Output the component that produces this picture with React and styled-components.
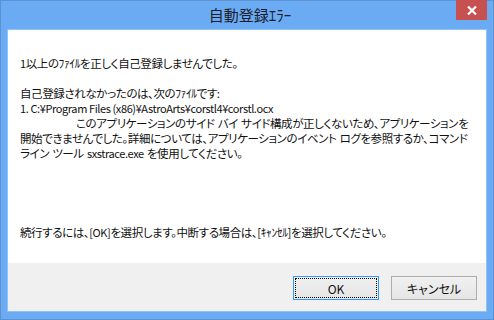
import React from 'react'
import styled, { createGlobalStyle } from 'styled-components'

const GlobalStyle = createGlobalStyle`
    html, body {
        margin: 0;
        padding: 0;
        background: #fff;
    }
    body {
        font-family: "Noto Sans CJK JP", "Noto Sans", sans-serif;
    }
`

const Window = styled.div`
    width: 494px;
    height: 320px;
    box-sizing: border-box;
    background-color: #6aabf4;
    border: 1px solid #5b92d4;
    padding: 0 6px 7px 6px;
    display: flex;
    flex-direction: column;
`

const TitleBar = styled.div`
    height: 28px;
    display: grid;
    grid-template-columns: 1fr auto 1fr;
    align-items: start;
`

const Title = styled.div`
    grid-column: 2;
    font-size: 15px;
    line-height: 28px;
    color: #1b1b2a;
    margin-left: 6px;
`

const CloseButton = styled.div`
    grid-column: 3;
    justify-self: end;
    width: 31px;
    height: 20px;
    margin-top: -1px;
    background-color: #c75050;
    display: flex;
    align-items: center;
    justify-content: center;
`

const Client = styled.div`
    flex: 1;
    border: 1px solid #8fc2f6;
    display: flex;
    flex-direction: column;
    background: #fff;
`

const Body = styled.div`
    flex: 1;
    padding: 26px 12px 23px 12px;
    display: flex;
    flex-direction: column;
    font-size: 11.5px;
    font-feature-settings: "palt";
    letter-spacing: -0.4px;
    word-spacing: 1px;
    line-height: 15px;
    color: #111;
`

const Para = styled.div`
    margin-bottom: ${({ gap }) => gap || 0}px;
`

const Line = styled.div`
    white-space: nowrap;
    padding-left: ${({ indent }) => indent || 0}px;
`

const Roman = styled.span`
    font-size: 11px;
    font-feature-settings: normal;
    letter-spacing: -0.4px;
    word-spacing: 0;
`

const Continue = styled.div`
    margin-top: auto;
    white-space: nowrap;
`

const Footer = styled.div`
    height: 48px;
    background-color: #f0f0f0;
    display: flex;
    justify-content: flex-end;
    align-items: flex-start;
    gap: 12px;
    padding: 13px 9px 0 0;
    box-sizing: border-box;
`

const Button = styled.div`
    width: 86px;
    height: 24px;
    box-sizing: border-box;
    border: 1px solid ${({ primary }) => primary ? '#3399ff' : '#adadad'};
    background: linear-gradient(#f0f0f0, #e5e5e5);
    display: flex;
    padding: 1px;
    font-size: 12px;
    font-feature-settings: "palt";
    color: #111;
`

const ButtonLabel = styled.span`
    flex: 1;
    display: flex;
    align-items: center;
    justify-content: center;
    border: 1px dotted ${({ focused }) => focused ? '#000' : 'transparent'};
`

export default function App() {
    return (
        <>
            <GlobalStyle />
            <Window>
                <TitleBar>
                    <Title>自動登録ｴﾗｰ</Title>
                    <CloseButton>
                        <svg width="10" height="9" viewBox="0 0 10 9">
                            <path d="M1 0.5 L9 8.5 M9 0.5 L1 8.5" stroke="#fff" strokeWidth="2.2" />
                        </svg>
                    </CloseButton>
                </TitleBar>
                <Client>
                    <Body>
                        <Para gap={15}>
                            <Line><Roman>1</Roman>以上のﾌｧｲﾙを正しく自己登録しませんでした。</Line>
                        </Para>
                        <Para>
                            <Line>自己登録されなかったのは、次のﾌｧｲﾙです:</Line>
                            <Line><Roman>1. C:¥Program Files (x86)¥AstroArts¥corstl4¥corstl.ocx</Roman></Line>
                            <Line indent={56}>このアプリケーションのサイド バイ サイド構成が正しくないため、アプリケーションを</Line>
                            <Line>開始できませんでした。詳細については、アプリケーションのイベント ログを参照するか、コマンド</Line>
                            <Line>ライン ツール <Roman>sxstrace.exe</Roman> を使用してください。</Line>
                        </Para>
                        <Continue>続行するには、<Roman>[OK]</Roman>を選択します。中断する場合は、[ｷｬﾝｾﾙ]を選択してください。</Continue>
                    </Body>
                    <Footer>
                        <Button primary>
                            <ButtonLabel focused>OK</ButtonLabel>
                        </Button>
                        <Button>
                            <ButtonLabel>キャンセル</ButtonLabel>
                        </Button>
                    </Footer>
                </Client>
            </Window>
        </>
    )
}
